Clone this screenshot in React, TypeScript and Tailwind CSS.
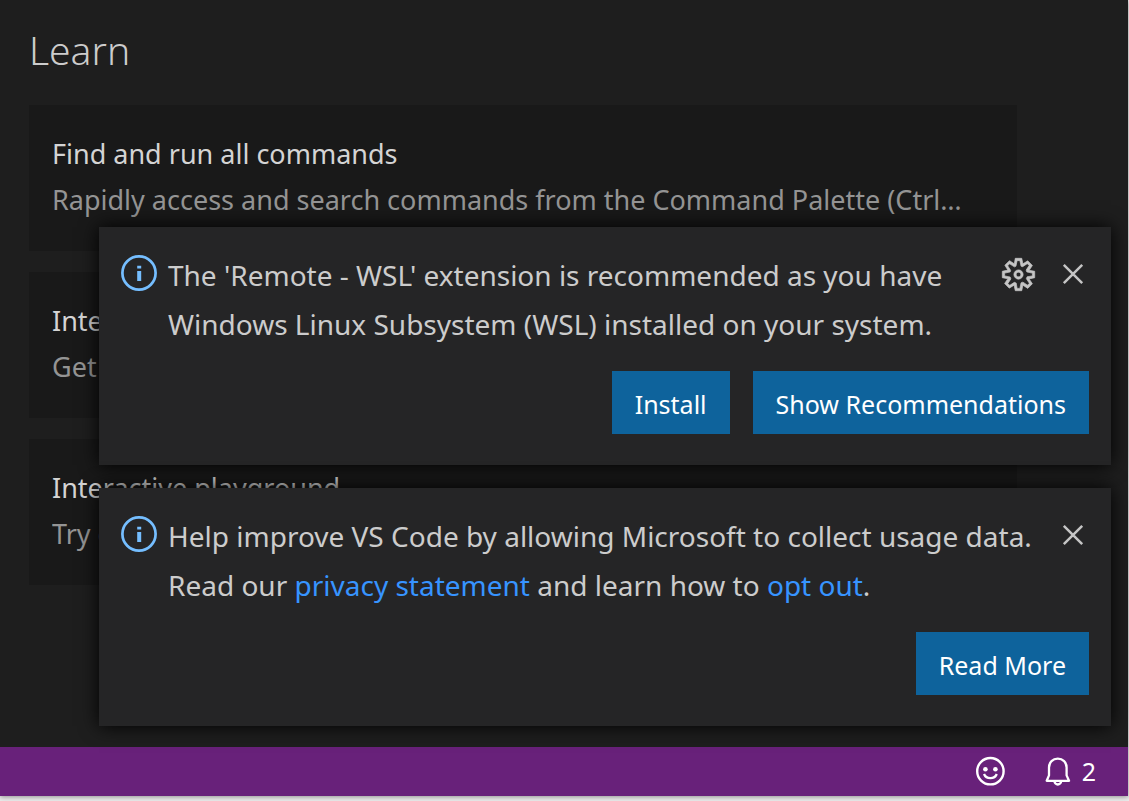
import type { ReactNode } from "react";
import { VscGear } from "react-icons/vsc";

const lessons = [
  {
    title: "Find and run all commands",
    detail: "Rapidly access and search commands from the Command Palette (Ctrl+Shift+P)",
  },
  {
    title: "Interface overview",
    detail: "Get a visual overlay highlighting the major components of the UI",
  },
  {
    title: "Interactive playground",
    detail: "Try out essential editor features in a short walkthrough",
  },
];

function InfoIcon() {
  return (
    <svg viewBox="0 0 36 36" aria-hidden className="mt-1 size-9 shrink-0 text-[#75beff]">
      <circle cx="18" cy="18" r="16.6" fill="none" stroke="currentColor" strokeWidth="2.7" />
      <path d="M16.2 10.8h4v2.8h-4zM16.2 16h4v10h-4z" fill="currentColor" />
    </svg>
  );
}

function CloseIcon() {
  return (
    <svg viewBox="0 0 32 32" aria-hidden className="size-8">
      <path d="M6.8 6.8l18.4 18.4M25.2 6.8L6.8 25.2" fill="none" stroke="currentColor" strokeWidth="2.5" />
    </svg>
  );
}

function SmileyIcon() {
  return (
    <svg viewBox="0 0 32 32" aria-hidden className="size-8">
      <circle cx="16.4" cy="15.2" r="13.2" fill="none" stroke="currentColor" strokeWidth="2.4" />
      <circle cx="11.4" cy="13.2" r="2.3" fill="currentColor" />
      <circle cx="21.4" cy="13.2" r="2.3" fill="currentColor" />
      <path d="M10 18c1.1 2.7 3.5 4.2 6.4 4.2s5.3-1.5 6.4-4.2" fill="none" stroke="currentColor" strokeWidth="2.3" />
    </svg>
  );
}

function BellIcon() {
  return (
    <svg viewBox="0 0 32 32" aria-hidden className="size-8">
      <g fill="none" stroke="currentColor" strokeWidth="2.3" strokeLinejoin="round">
        <path d="M4.7 24.8L7 19.4V11.6C7 6.2 10.8 2.7 15.8 2.7S24.6 6.2 24.6 11.6V19.4L27 24.8Z" />
        <path d="M12.5 25.2a3.3 3.3 0 0 0 6.6 0" />
      </g>
    </svg>
  );
}

function LessonCard({ title, detail }: { title: string; detail: string }) {
  return (
    <button type="button" className="block w-full bg-[#191919] pt-[26px] pr-11 pb-[28px] pl-[23px] text-left">
      <span className="block truncate text-[27px] leading-[46px] text-[#d4d4d4]">{title}</span>
      <span className="block truncate text-[27px] leading-[46px] text-[#949494]">{detail}</span>
    </button>
  );
}

function Toast({ children, actions, settings = false }: { children: ReactNode; actions: string[]; settings?: boolean }) {
  return (
    <section className="bg-[#252526] px-[22px] pt-6 pb-[31px] shadow-[0_0_18px_#000]">
      <div className="flex items-start">
        <InfoIcon />
        <p className="ml-[11px] min-w-0 flex-1 text-[28px] leading-[49px] text-[#cccccc]">{children}</p>
        <div className="flex h-[46px] items-center gap-5 text-[#c5c5c5]">
          {settings && (
            <button type="button" aria-label="Manage notification">
              <VscGear className="size-[37px] stroke-current stroke-[0.3]" />
            </button>
          )}
          <button type="button" aria-label="Clear notification">
            <CloseIcon />
          </button>
        </div>
      </div>
      <div className="mt-[22px] flex justify-end gap-[23px]">
        {actions.map((label) => (
          <button key={label} type="button" className="h-[63px] bg-[#0e639c] px-[23px] pt-1 text-[25px] text-white">
            {label}
          </button>
        ))}
      </div>
    </section>
  );
}

export default function App() {
  return (
    <div className="min-h-screen bg-[#ececec] pr-px pb-[5px] font-['Noto_Sans',sans-serif]">
      <div className="relative flex min-h-[calc(100vh-5px)] flex-col bg-[#1e1e1e] shadow-[0_1px_5px_rgba(0,0,0,0.4)]">
        <main className="flex-1 pt-[22px] pr-[111px] pl-[29px]">
          <h1 className="text-[39px] leading-[56px] font-light text-[#cccccc]">Learn</h1>
          <div className="mt-[27px] flex flex-col gap-[21px]">
            {lessons.map((lesson) => (
              <LessonCard key={lesson.title} {...lesson} />
            ))}
          </div>
        </main>
        <div className="absolute right-[17px] bottom-[70px] left-[99px] flex flex-col gap-[23px]">
          <Toast actions={["Install", "Show Recommendations"]} settings>
            The 'Remote - WSL' extension is recommended as you have Windows Linux Subsystem (WSL) installed on your
            system.
          </Toast>
          <Toast actions={["Read More"]}>
            Help improve VS Code by allowing Microsoft to collect usage data. Read our{" "}
            <a href="#privacy" className="text-[#3794ff]">privacy statement</a> and learn how to{" "}
            <a href="#opt-out" className="text-[#3794ff]">opt out</a>.
          </Toast>
        </div>
        <footer className="flex h-[49px] items-center justify-end gap-9 bg-[#68217a] pr-8 text-white">
          <button type="button" aria-label="Tweet feedback">
            <SmileyIcon />
          </button>
          <button type="button" aria-label="Notifications" className="flex items-center gap-2 text-[25px]">
            <BellIcon />
            <span>2</span>
          </button>
        </footer>
      </div>
    </div>
  );
}
